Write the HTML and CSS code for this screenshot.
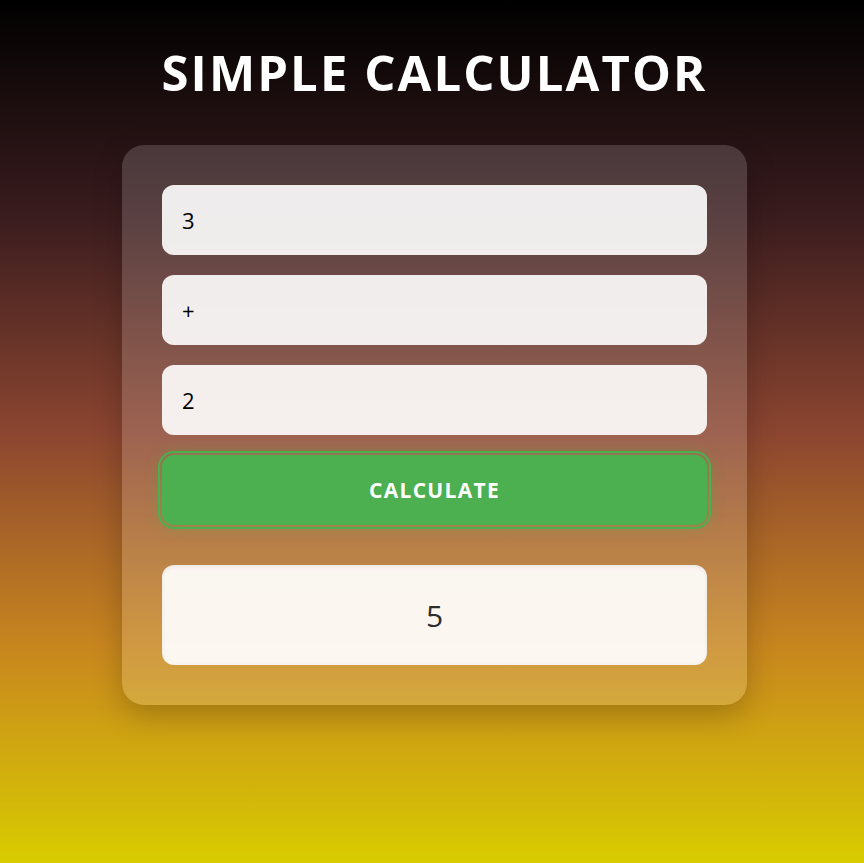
FILE: index.html
```html
<!DOCTYPE html>
<html lang="en">
<head>
<meta charset="utf-8">
<title>Simple Calculator</title>
<link rel="stylesheet" href="styles.css">
</head>
<body>
<main class="page">
  <h1 class="title">SIMPLE CALCULATOR</h1>
  <section class="card">
    <input class="field" type="text" value="3">
    <input class="field" type="text" value="+">
    <input class="field" type="text" value="2">
    <button class="calc-btn" type="button">CALCULATE</button>
    <div class="result">5</div>
  </section>
</main>
</body>
</html>
```

FILE: styles.css
```css
* { box-sizing: border-box; }

html, body {
  margin: 0;
  height: 100%;
}

body {
  font-family: "Open Sans", "Noto Sans", "DejaVu Sans", sans-serif;
  background: linear-gradient(to bottom, #000000 0%, #3a1c1e 25%, #8b4530 50%, #c8861e 75%, #d8cc00 100%);
  min-height: 863px;
}

.page {
  display: flex;
  flex-direction: column;
  align-items: center;
  padding-top: 40px;
  padding-left: 5px;
}

.title {
  margin: 0 0 40px;
  color: #ffffff;
  font-size: 49px;
  font-weight: 700;
  letter-spacing: 2.1px;
  line-height: 65px;
}

.card {
  width: 625px;
  padding: 40px;
  border-radius: 22px;
  background: rgba(255, 255, 255, 0.16);
  box-shadow: 0 10px 30px rgba(0, 0, 0, 0.22);
  display: flex;
  flex-direction: column;
  gap: 20px;
}

.field {
  height: 70px;
  width: 100%;
  border: none;
  border-radius: 12px;
  padding: 0 20px;
  background: rgba(255, 255, 255, 0.9);
  font-family: inherit;
  font-size: 22px;
  color: #000;
  outline: none;
}

.calc-btn {
  height: 70px;
  width: 100%;
  border: none;
  border-radius: 12px;
  background: #4caf50;
  color: #ffffff;
  font-family: inherit;
  font-size: 21px;
  font-weight: 700;
  letter-spacing: 1.3px;
  outline: 2px solid #4caf50;
  outline-offset: 2px;
  box-shadow: 0 0 16px rgba(76, 175, 80, 0.45);
}

.result {
  margin-top: 20px;
  height: 100px;
  border-radius: 12px;
  background: rgba(255, 255, 255, 0.92);
  box-shadow: inset 0 1px 4px rgba(0, 0, 0, 0.08);
  display: flex;
  align-items: center;
  justify-content: center;
  font-size: 30px;
  color: #2e2e2e;
}
```
